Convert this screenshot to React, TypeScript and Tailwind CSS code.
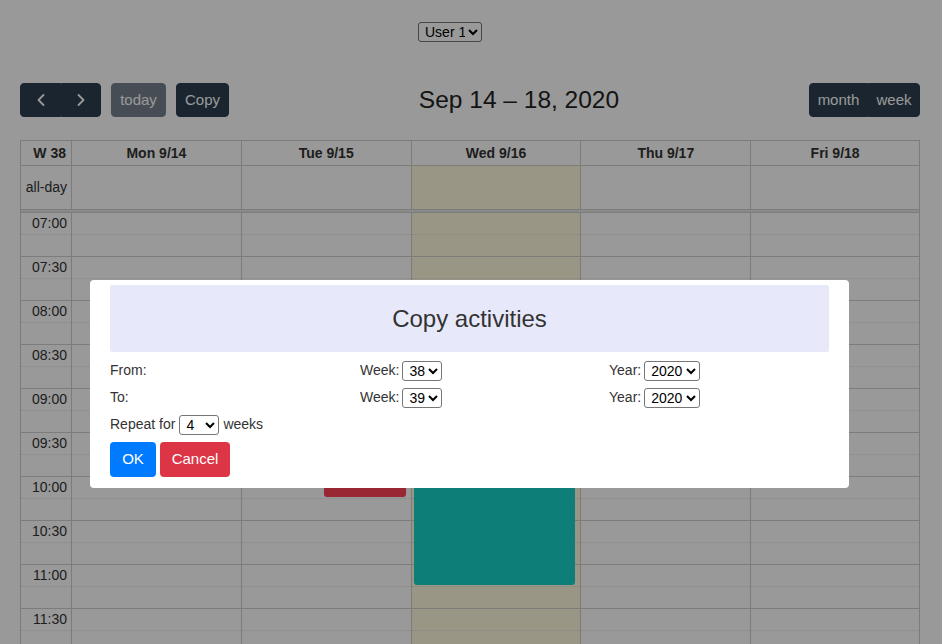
import { ChevronLeft, ChevronRight } from 'lucide-react';

const days = ['Mon 9/14', 'Tue 9/15', 'Wed 9/16', 'Thu 9/17', 'Fri 9/18'];

const slotLabel = (i: number) => {
  if (i % 2 !== 0) return '';
  const h = 7 + Math.floor(i / 4);
  const m = (i / 2) % 2 ? '30' : '00';
  return `${h < 10 ? '0' + h : h}:${m}`;
};

const slots = Array.from({ length: 20 }, (_, i) => i);

const SlotCell = ({ i, today, label }: { i: number; today?: boolean; label?: string }) => (
  <div
    className={`h-[22px] shrink-0 flex items-center justify-end pr-[4px] text-[14px] ${
      i % 2 === 0 ? 'border-b border-dotted border-b-[#e2e2e2]' : 'border-b border-[#cfcfcf]'
    } ${today ? 'bg-[#fffadf]' : ''}`}
  >
    {label}
  </div>
);

const Calendar = () => {
  return (
    <div className="mt-[23px] border-t border-[#cfcfcf] text-[#333]">
      {/* header */}
      <div className="grid grid-cols-[51px_repeat(5,1fr)] h-[25px] border-b border-[#cfcfcf]">
        <div className="border-l border-[#cfcfcf] flex items-center justify-end pr-[5px] font-bold text-[14px]">W 38</div>
        {days.map((d, idx) => (
          <div
            key={d}
            className={`border-l border-[#cfcfcf] flex items-center justify-center font-bold text-[14px] ${idx === 4 ? 'border-r' : ''}`}
          >
            {d}
          </div>
        ))}
      </div>
      {/* all-day */}
      <div className="grid grid-cols-[51px_repeat(5,1fr)] h-[44px] border-b border-[#cfcfcf]">
        <div className="border-l border-[#cfcfcf] flex items-center justify-end pr-[4px] text-[14px]">all-day</div>
        {days.map((d, idx) => (
          <div
            key={d}
            className={`border-l border-[#cfcfcf] ${idx === 2 ? 'bg-[#fffadf]' : ''} ${idx === 4 ? 'border-r' : ''}`}
          />
        ))}
      </div>
      <div className="h-[2px] bg-[#e6e6e6] border-x border-[#cfcfcf] border-b border-b-[#cfcfcf] box-content" />
      {/* time grid */}
      <div className="grid grid-cols-[51px_repeat(5,1fr)]">
        <div className="border-l border-[#cfcfcf] flex flex-col">
          {slots.map((i) => (
            <SlotCell key={i} i={i} label={slotLabel(i)} />
          ))}
        </div>
        {days.map((d, idx) => (
          <div
            key={d}
            className={`relative border-l border-[#cfcfcf] flex flex-col ${idx === 4 ? 'border-r' : ''}`}
          >
            {slots.map((i) => (
              <SlotCell key={i} i={i} today={idx === 2} />
            ))}
            {idx === 1 && (
              <div className="absolute left-[82px] right-[5px] top-[188px] h-[96px] rounded-[3px] bg-[#ff4055]" />
            )}
            {idx === 2 && (
              <div className="absolute left-[2px] right-[5px] top-[88px] h-[284px] rounded-[3px] bg-[#18d4c8]" />
            )}
          </div>
        ))}
      </div>
    </div>
  );
};

const Toolbar = () => {
  const btn = 'h-[34px] flex items-center justify-center text-[15px] text-white bg-[#2c3e50] border border-[#2c3e50]';
  return (
    <div className="flex items-center justify-between h-[34px] mt-[41px]">
      <div className="flex items-center gap-[10px]">
        <div className="flex">
          <button className={`${btn} w-[41px] rounded-l-[4px]`}>
            <ChevronLeft size={20} strokeWidth={2.2} />
          </button>
          <button className={`${btn} w-[40px] rounded-r-[4px]`}>
            <ChevronRight size={20} strokeWidth={2.2} />
          </button>
        </div>
        <button className={`${btn} w-[55px] rounded-[4px] opacity-65`}>today</button>
        <button className={`${btn} w-[53px] rounded-[4px]`}>Copy</button>
      </div>
      <h2 className="text-[24.5px] text-[#222] leading-none">Sep 14 – 18, 2020</h2>
      <div className="flex">
        <button className={`${btn} w-[59px] rounded-l-[4px]`}>month</button>
        <button className={`${btn} w-[52px] rounded-r-[4px] bg-[#1a252f] border-[#1a252f]`}>week</button>
      </div>
    </div>
  );
};

const sel = 'h-[20px] border border-[#767676] rounded-[3px] bg-white text-[14px] text-black pl-[2px]';

const CopyModal = () => {
  return (
    <div className="fixed inset-0 bg-black/40 flex justify-start pl-[90px] pt-[280px]">
      <div className="w-[759px] h-[208px] bg-white rounded-[4px] px-5 pt-[5px] text-[14px] text-[#333]">
        <div className="h-[67px] bg-[#e7e9fb] rounded-[2px] flex items-center justify-center text-[24px] text-[#333]">
          Copy activities
        </div>
        <div className="mt-[5px] grid grid-cols-[250px_249px_1fr]">
          <div className="h-[27px] flex items-center">From:</div>
          <div className="h-[27px] flex items-center gap-[3px]">
            Week:
            <select className={`${sel} w-[40px]`} defaultValue="38">
              <option>38</option>
            </select>
          </div>
          <div className="h-[27px] flex items-center gap-[3px]">
            Year:
            <select className={`${sel} w-[56px]`} defaultValue="2020">
              <option>2020</option>
            </select>
          </div>
          <div className="h-[27px] flex items-center">To:</div>
          <div className="h-[27px] flex items-center gap-[3px]">
            Week:
            <select className={`${sel} w-[40px]`} defaultValue="39">
              <option>39</option>
            </select>
          </div>
          <div className="h-[27px] flex items-center gap-[3px]">
            Year:
            <select className={`${sel} w-[56px]`} defaultValue="2020">
              <option>2020</option>
            </select>
          </div>
        </div>
        <div className="h-[27px] flex items-center gap-[4px]">
          Repeat for
          <select className={`${sel} w-[40px]`} defaultValue="4">
            <option>4</option>
          </select>
          weeks
        </div>
        <div className="mt-[4px] flex gap-[4px]">
          <button className="w-[46px] h-[35px] rounded-[4px] bg-[#007bff] text-white text-[15px]">OK</button>
          <button className="w-[70px] h-[35px] rounded-[4px] bg-[#dc3545] text-white text-[15px]">Cancel</button>
        </div>
      </div>
    </div>
  );
};

export default function App() {
  return (
    <div className="h-screen overflow-hidden bg-white font-['Liberation_Sans',Arial,sans-serif]">
      <div className="pl-5 pr-[22px]">
        <div className="flex justify-center pt-[22px] pr-[40px]">
          <select className={`${sel} w-[64px]`} defaultValue="1">
            <option value="1">User 1</option>
          </select>
        </div>
        <Toolbar />
        <Calendar />
      </div>
      <CopyModal />
    </div>
  );
}
